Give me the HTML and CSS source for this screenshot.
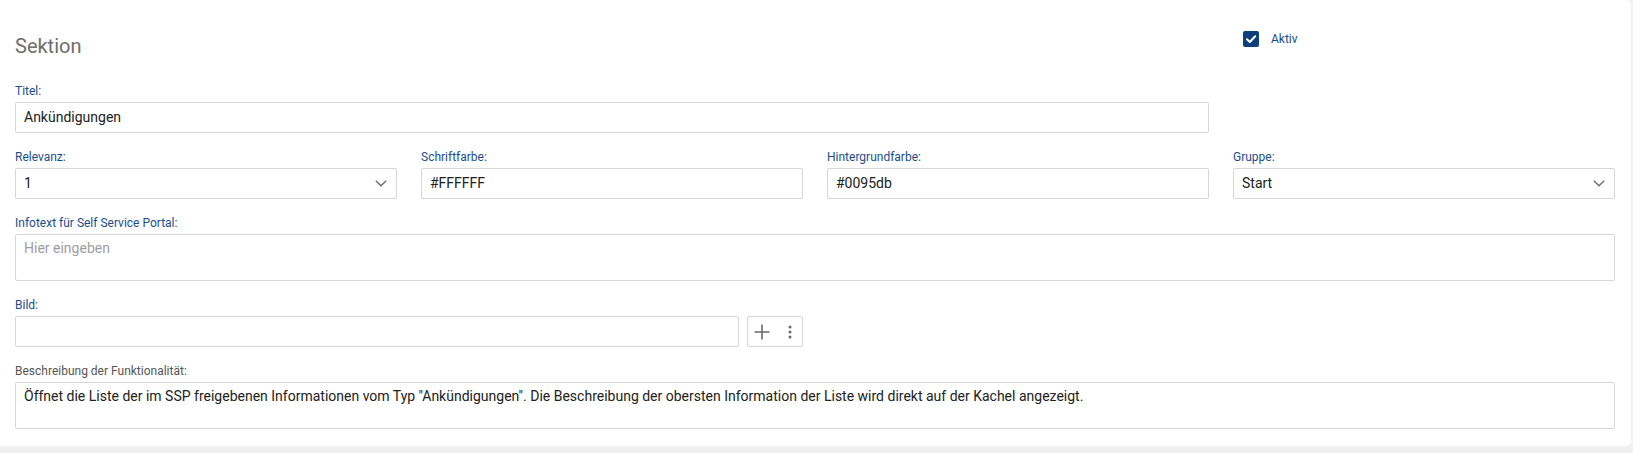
FILE: index.html
```html
<!DOCTYPE html>
<html lang="de">
<head>
<meta charset="utf-8">
<title>Sektion</title>
<link rel="stylesheet" href="styles.css">
</head>
<body>
<div class="card">
  <div class="form">
    <div class="header span3">
      <h2 class="title">Sektion</h2>
    </div>
    <div class="header-aside">
      <label class="check">
        <span class="box">
          <svg width="16" height="16" viewBox="0 0 16 16"><path d="M4 8.3 L6.8 11 L12.2 5.2" fill="none" stroke="#fff" stroke-width="2" stroke-linecap="round" stroke-linejoin="round"/></svg>
        </span>
        <span class="check-text">Aktiv</span>
      </label>
    </div>

    <div class="field span3">
      <div class="label">Titel:</div>
      <div class="input">Ankündigungen</div>
    </div>
    <div class="field"></div>

    <div class="field">
      <div class="label">Relevanz:</div>
      <div class="input select">1
        <svg class="chev" width="12" height="7" viewBox="0 0 12 7"><path d="M0.8 0.8 L6 5.8 L11.2 0.8" fill="none" stroke="#6a6a6a" stroke-width="1.3"/></svg>
      </div>
    </div>
    <div class="field">
      <div class="label">Schriftfarbe:</div>
      <div class="input">#FFFFFF</div>
    </div>
    <div class="field">
      <div class="label">Hintergrundfarbe:</div>
      <div class="input">#0095db</div>
    </div>
    <div class="field">
      <div class="label">Gruppe:</div>
      <div class="input select">Start
        <svg class="chev" width="12" height="7" viewBox="0 0 12 7"><path d="M0.8 0.8 L6 5.8 L11.2 0.8" fill="none" stroke="#6a6a6a" stroke-width="1.3"/></svg>
      </div>
    </div>

    <div class="field span4">
      <div class="label">Infotext für Self Service Portal:</div>
      <div class="area placeholder">Hier eingeben</div>
    </div>

    <div class="field span2">
      <div class="label">Bild:</div>
      <div class="bild-row">
        <div class="input grow"></div>
        <div class="btn">
          <svg width="16" height="16" viewBox="0 0 16 16"><path d="M8 0.5 V15.5 M0.5 8 H15.5" stroke="#6a6a6a" stroke-width="1.6"/></svg>
          <svg width="4" height="14" viewBox="0 0 4 14"><circle cx="2" cy="2" r="1.5" fill="#6a6a6a"/><circle cx="2" cy="7" r="1.5" fill="#6a6a6a"/><circle cx="2" cy="12" r="1.5" fill="#6a6a6a"/></svg>
        </div>
      </div>
    </div>

    <div class="field span4">
      <div class="label grey">Beschreibung der Funktionalität:</div>
      <div class="area desc">Öffnet die Liste der im SSP freigebenen Informationen vom Typ "Ankündigungen". Die Beschreibung der obersten Information der Liste wird direkt auf der Kachel angezeigt.</div>
    </div>
  </div>
</div>
</body>
</html>
```
FILE: styles.css
```css
* { box-sizing: border-box; }
html, body { margin: 0; padding: 0; }
body {
  background: #f0f0f0;
  font-family: Roboto, "Liberation Sans", Arial, sans-serif;
  color: #212121;
  width: 1633px;
  height: 453px;
  overflow: hidden;
}
.card {
  width: 1631px;
  height: 446px;
  background: #fff;
  border-radius: 0 5px 5px 0;
  padding: 0 16px 17px 15px;
}
.form {
  display: grid;
  grid-template-columns: repeat(4, 382px);
  grid-template-rows: 67px;
  column-gap: 24px;
  row-gap: 17px;
}
.span2 { grid-column: span 2; }
.span3 { grid-column: span 3; }
.span4 { grid-column: span 4; }
.header { padding-top: 34px; }
.title {
  margin: 0;
  font-size: 20px;
  line-height: 24px;
  font-weight: 400;
  color: #6e6e6e;
}
.header-aside { padding-top: 31px; padding-left: 10px; }
.check { display: flex; align-items: center; gap: 12px; }
.box {
  width: 16px;
  height: 16px;
  border-radius: 2px;
  background: #0e3e7c;
  display: flex;
}
.check-text { font-size: 12px; color: #1b4a88; line-height: 16px; }
.field { display: flex; flex-direction: column; }
.label {
  font-size: 12px;
  line-height: 14px;
  color: #1b4d8e;
  margin-bottom: 4px;
}
.label.grey { color: #555; }
.input {
  height: 31px;
  border: 1px solid #d6d6d6;
  border-radius: 2px;
  padding: 0 8px;
  font-size: 14px;
  line-height: 29px;
  color: #212121;
  display: flex;
  align-items: center;
}
.select { justify-content: space-between; padding-right: 9px; }
.chev { display: block; }
.area {
  height: 47px;
  border: 1px solid #d6d6d6;
  border-radius: 2px;
  padding: 4px 8px 0;
  font-size: 14px;
  line-height: 18px;
}
.placeholder { color: #9e9e9e; }
.desc { color: #212121; }
.bild-row { display: flex; gap: 8px; }
.grow { flex: 1; }
.btn {
  width: 56px;
  height: 31px;
  border: 1px solid #d6d6d6;
  border-radius: 2px;
  display: flex;
  align-items: center;
  padding-left: 6px;
  gap: 18px;
}
.btn svg { display: block; }
```
